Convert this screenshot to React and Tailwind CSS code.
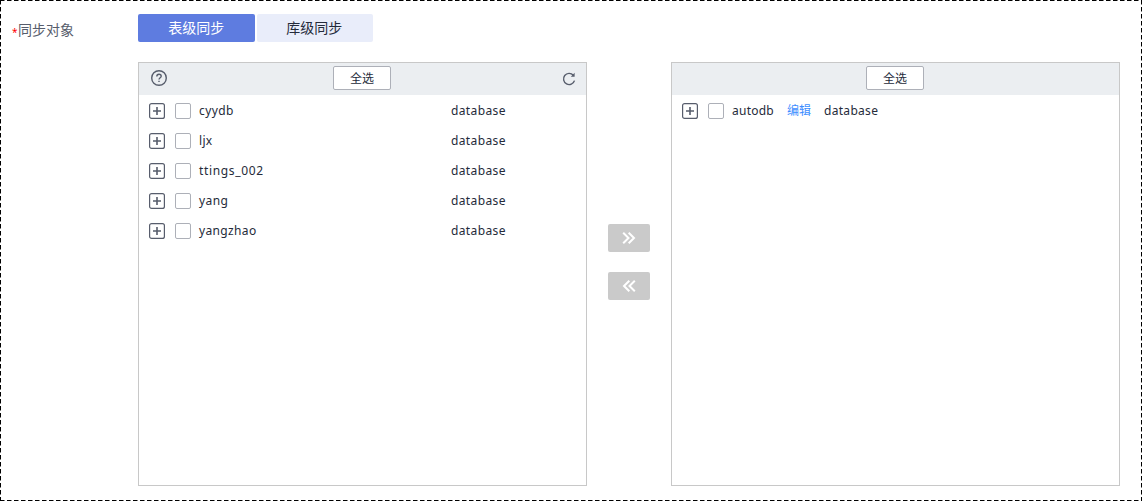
import React from "react";

const sourceDatabases = [
  { name: "cyydb", tracking: "tracking-[0.4px]" },
  { name: "ljx", tracking: "tracking-[0.3px]" },
  { name: "ttings_002", tracking: "tracking-[0.65px]" },
  { name: "yang", tracking: "tracking-[0.4px]" },
  { name: "yangzhao", tracking: "tracking-[0.35px]" },
];

function ExpandIcon() {
  return (
    <svg width="16" height="16" viewBox="0 0 16 16" fill="none" stroke="#575d6c" className="shrink-0">
      <rect x="0.6" y="0.6" width="14.8" height="14.8" rx="2" strokeWidth="1.2" />
      <path d="M4 8h8M8 4v8" strokeWidth="1.6" />
    </svg>
  );
}

function HelpIcon() {
  return (
    <svg width="16" height="16" viewBox="0 0 16 16" fill="none" stroke="#575d6c" strokeWidth="1.4">
      <circle cx="8" cy="8" r="7.3" />
      <path d="M5.8 6.4C5.8 5 6.7 4.2 8 4.2s2.2.8 2.2 2c0 1.5-2.2 1.7-2.2 3.4" />
      <path d="M8 10.7v1.4" />
    </svg>
  );
}

function RefreshIcon() {
  return (
    <svg width="14" height="14" viewBox="0 0 14 14" fill="none" stroke="#575d6c" strokeWidth="1.4">
      <path d="M11.3 3.2A5.6 5.6 0 1 0 12.5 8.6" />
      <path d="M12.6 0.8v4H8.8z" fill="#575d6c" stroke="none" />
    </svg>
  );
}

function Chevrons({ left }) {
  return (
    <svg width="14" height="12" viewBox="0 0 14 12" fill="none" stroke="#fff" strokeWidth="2" className={left ? "rotate-180" : ""}>
      <path d="M1.2 0.7 6.5 6 1.2 11.3M6.7 0.7 12 6 6.7 11.3" />
    </svg>
  );
}

function Panel({ tools, children }) {
  return (
    <section className="h-[424px] w-[449px] border border-[#c8c8c8] bg-white">
      <header className="flex h-8 items-center justify-between bg-[#ebeef1] pr-2.5 pl-3">
        <div className="w-[182px] pb-0.5">{tools && <HelpIcon />}</div>
        <button className="mb-0.5 flex h-6 w-[58px] items-center justify-center rounded-xs border border-[#adb0b8] bg-white pt-0.5 text-xs text-[#252b3a]">
          全选
        </button>
        <div className="flex w-[185px] justify-end">{tools && <RefreshIcon />}</div>
      </header>
      <div className="pt-px">{children}</div>
    </section>
  );
}

function Row({ children }) {
  return (
    <div className="flex h-[30px] items-center pl-2.5">
      <ExpandIcon />
      <span className="mr-2 ml-2.5 size-4 shrink-0 rounded-xs border border-[#adb0b8] bg-white" />
      {children}
    </div>
  );
}

export default function App() {
  return (
    <main className="relative h-[501px] w-[1142px] bg-white font-['Noto_Sans','Noto_Sans_CJK_SC',sans-serif] text-xs text-[#252b3a]">
      <svg className="pointer-events-none absolute inset-0" width="1142" height="501" fill="none" stroke="#000" strokeDasharray="4.5 2.5">
        <path d="M0 .5H1142M0 500.5H1142M.5 0V501M1141.5 0V501" />
      </svg>
      <div className="flex pt-3.5 pl-3">
        <div className="flex h-8 w-[126px] items-center text-sm text-[#575d6c]">
          <span className="w-1.5 pt-1 text-[10px] text-[#f00]">*</span>同步对象
        </div>
        <div>
          <div className="flex gap-0.5 text-sm">
            <button className="h-7 w-[116.5px] rounded-xs bg-[#5e7ce0] text-white">表级同步</button>
            <button className="h-7 w-[116.5px] rounded-xs bg-[#e9edfa] pr-px">库级同步</button>
          </div>
          <div className="mt-5 flex">
            <Panel tools>
              {sourceDatabases.map(({ name, tracking }) => (
                <Row key={name}>
                  <span className={`w-[252px] ${tracking}`}>{name}</span>
                  <span className="tracking-[0.38px]">database</span>
                </Row>
              ))}
            </Panel>
            <div className="flex w-[84px] flex-col items-center gap-5 pt-[162px]">
              <button className="flex h-7 w-[42px] items-center justify-center rounded-xs bg-[#cacaca]"><Chevrons /></button>
              <button className="flex h-7 w-[42px] items-center justify-center rounded-xs bg-[#cacaca]"><Chevrons left /></button>
            </div>
            <Panel>
              <Row>
                <span className="w-[55px] tracking-[0.25px]">autodb</span>
                <a className="w-[37px] text-[#3d8eff]">编辑</a>
                <span className="tracking-[0.3px]">database</span>
              </Row>
            </Panel>
          </div>
        </div>
      </div>
    </main>
  );
}
